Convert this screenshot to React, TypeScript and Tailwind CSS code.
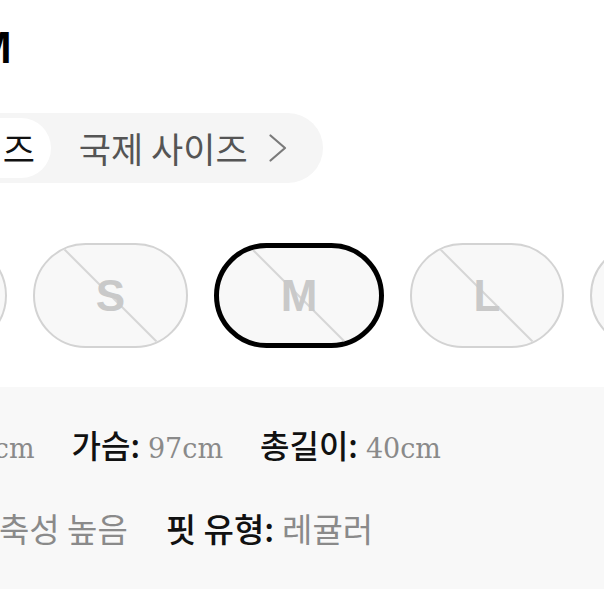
import React from "react";

const sans = { fontFamily: '"Noto Sans CJK KR", "Noto Sans", sans-serif' };
const serif = { fontFamily: '"DejaVu Serif", "Liberation Serif", serif' };

function SizePill({ label, width, selected }: { label: string; width: number; selected?: boolean }) {
  return (
    <div
      className={
        "relative shrink-0 h-[105px] rounded-full overflow-hidden bg-[#f8f8f8] flex items-center justify-center " +
        (selected ? "border-[5px] border-black" : "border-2 border-[#d3d3d3]")
      }
      style={{ width }}
    >
      <div className="absolute left-1/2 top-1/2 w-[220px] h-[2px] bg-[#d6d6d6] -translate-x-1/2 -translate-y-1/2 rotate-45" />
      <span
        className="relative text-[44px] font-bold text-[#c9c9c9] leading-none"
        style={{ fontFamily: '"Liberation Sans", Arial, sans-serif' }}
      >
        {label}
      </span>
    </div>
  );
}

function Item({
  label,
  value,
  valueSerif,
  labelClass,
  valueClass,
}: {
  label: string;
  value: string;
  valueSerif?: boolean;
  labelClass: string;
  valueClass: string;
}) {
  return (
    <div className="flex items-baseline gap-[8px]">
      <span className={labelClass + " text-[#111] font-medium"} style={sans}>
        {label}
      </span>
      <span className={valueClass + " text-[#8a8a8a]"} style={valueSerif ? serif : sans}>
        {value}
      </span>
    </div>
  );
}

export default function App() {
  return (
    <div className="w-[604px] h-[604px] overflow-hidden bg-white flex flex-col">
      <div
        className="mt-[26px] ml-[-25px] text-[44px] leading-[44px] font-bold text-black"
        style={{ fontFamily: '"Liberation Sans", Arial, sans-serif' }}
      >
        M
      </div>

      <div
        className="mt-[43px] ml-[-163px] self-start flex items-center h-[70px] p-[5px] rounded-full bg-[#f5f5f5]"
        style={sans}
      >
        <div className="h-full flex items-center pl-[24px] pr-[16px] rounded-full bg-white text-[35px] text-[#111] whitespace-nowrap">
          한국 사이즈
        </div>
        <div className="h-full flex items-center pl-[28px] pr-[31px] text-[35px] text-[#555] whitespace-nowrap">
          국제 사이즈
          <svg className="ml-[21px]" width="18" height="28" viewBox="0 0 18 28" fill="none">
            <path d="M1.5 1.5 L16 14 L1.5 26.5" stroke="#7a7a7a" strokeWidth="2.2" strokeLinecap="round" strokeLinejoin="round" />
          </svg>
        </div>
      </div>

      <div className="mt-[60px] ml-[-163px] flex gap-[26px]">
        <SizePill label="XS" width={170} />
        <SizePill label="S" width={155} />
        <SizePill label="M" width={170} selected />
        <SizePill label="L" width={154} />
        <SizePill label="XL" width={170} />
      </div>

      <div className="mt-[39px] h-[202px] bg-[#f8f8f8] pt-[38px] flex flex-col gap-[44px]">
        <div className="ml-[-117px] flex gap-[37px] h-[40px] items-center whitespace-nowrap">
          <Item label="어깨:" value="38cm" valueSerif labelClass="text-[32px]" valueClass="text-[27px]" />
          <Item label="가슴:" value="97cm" valueSerif labelClass="text-[32px]" valueClass="text-[27px]" />
          <Item label="총길이:" value="40cm" valueSerif labelClass="text-[32px]" valueClass="text-[27px]" />
        </div>
        <div className="ml-[-110px] flex gap-[38px] h-[40px] items-center whitespace-nowrap">
          <Item label="탄력:" value="신축성 높음" labelClass="text-[33px]" valueClass="text-[33px]" />
          <Item label="핏 유형:" value="레귤러" labelClass="text-[33px]" valueClass="text-[33px]" />
        </div>
      </div>
    </div>
  );
}
